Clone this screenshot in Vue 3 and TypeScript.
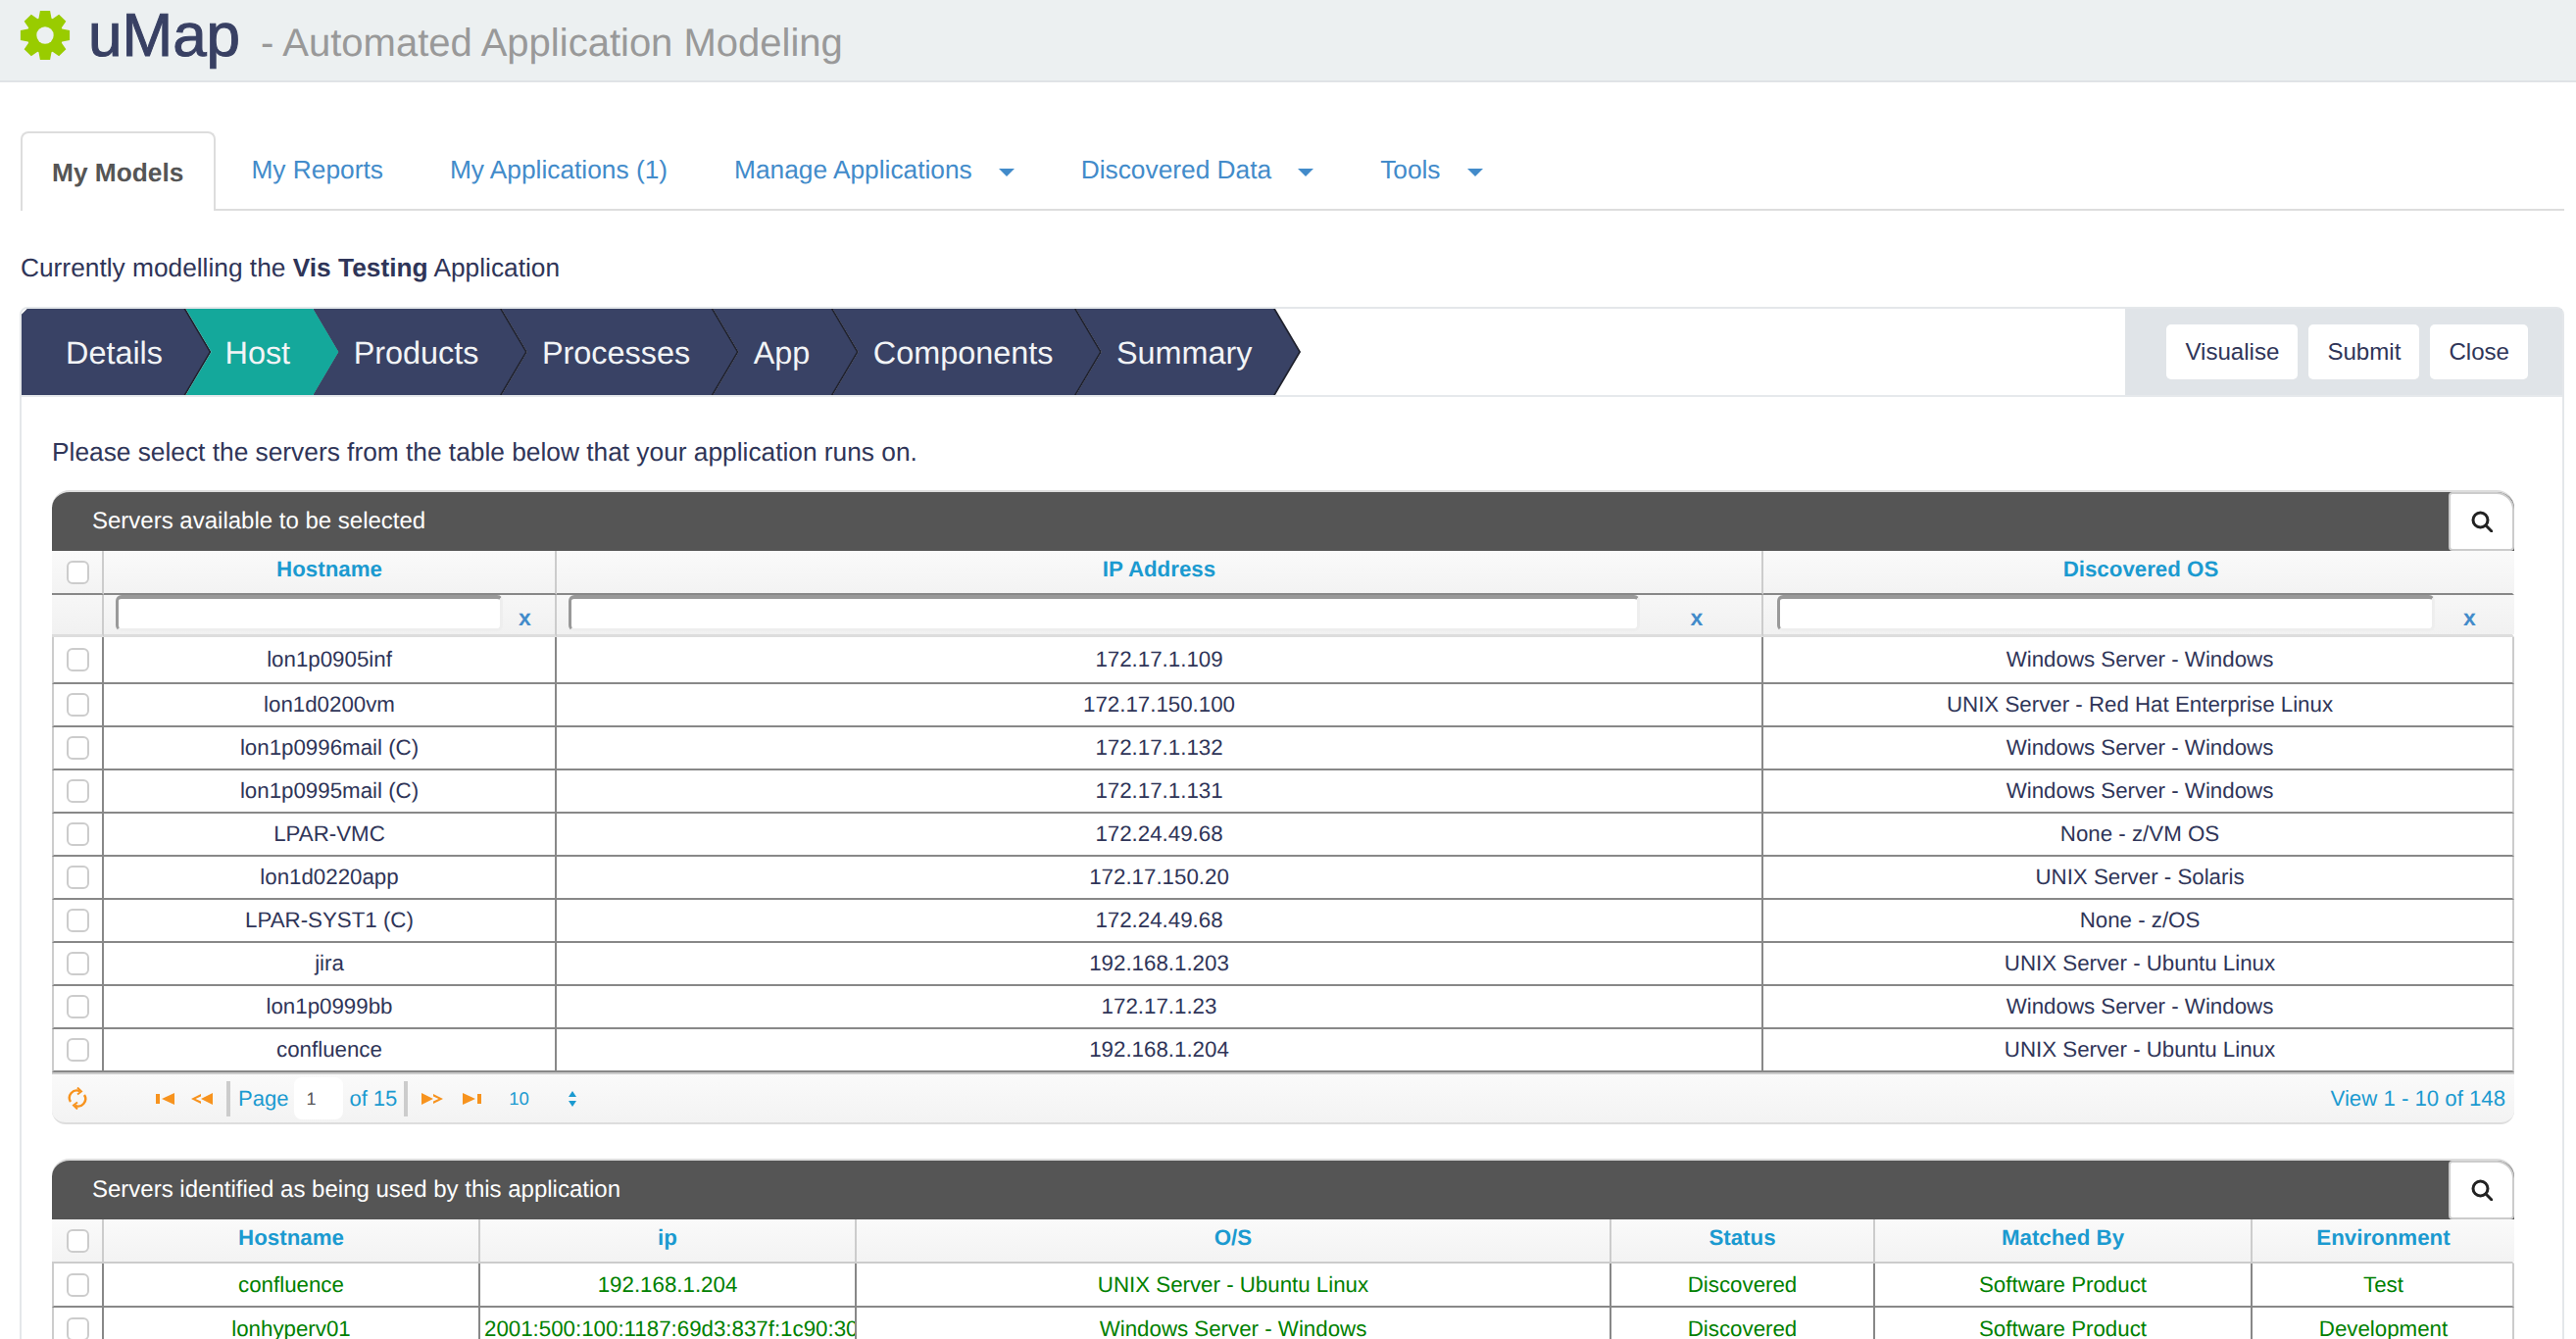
<script setup lang="ts">
const tabs = [
  { label: 'My Reports', caret: false },
  { label: 'My Applications (1)', caret: false },
  { label: 'Manage Applications', caret: true },
  { label: 'Discovered Data', caret: true },
  { label: 'Tools', caret: true },
]
const steps = ['Details', 'Host', 'Products', 'Processes', 'App', 'Components', 'Summary']
const actions = ['Visualise', 'Submit', 'Close']

function gearPath(): string {
  const cx = 26, cy = 26, outer = 25.6, root = 18.5
  const pts: string[] = []
  for (let i = 0; i < 8; i++) {
    const a = (i * Math.PI) / 4 - Math.PI / 2
    const t = [
      [root, -0.36],
      [outer, -0.2],
      [outer, 0.2],
      [root, 0.36],
    ]
    for (const [r, d] of t) {
      pts.push(`${(cx + r * Math.cos(a + d)).toFixed(2)} ${(cy + r * Math.sin(a + d)).toFixed(2)}`)
    }
  }
  return 'M' + pts.join('L') + 'Z'
}
const gear = gearPath()

const availCols = [53, 462, 1231, 766]
const availHead = ['Hostname', 'IP Address', 'Discovered OS']
const filters = [395, 1093, 671]
const availRows = [
  ['lon1p0905inf', '172.17.1.109', 'Windows Server - Windows'],
  ['lon1d0200vm', '172.17.150.100', 'UNIX Server - Red Hat Enterprise Linux'],
  ['lon1p0996mail (C)', '172.17.1.132', 'Windows Server - Windows'],
  ['lon1p0995mail (C)', '172.17.1.131', 'Windows Server - Windows'],
  ['LPAR-VMC', '172.24.49.68', 'None - z/VM OS'],
  ['lon1d0220app', '172.17.150.20', 'UNIX Server - Solaris'],
  ['LPAR-SYST1 (C)', '172.24.49.68', 'None - z/OS'],
  ['jira', '192.168.1.203', 'UNIX Server - Ubuntu Linux'],
  ['lon1p0999bb', '172.17.1.23', 'Windows Server - Windows'],
  ['confluence', '192.168.1.204', 'UNIX Server - Ubuntu Linux'],
]
const usedCols = [53, 384, 384, 770, 269, 385, 267]
const usedHead = ['Hostname', 'ip', 'O/S', 'Status', 'Matched By', 'Environment']
const usedRows = [
  ['confluence', '192.168.1.204', 'UNIX Server - Ubuntu Linux', 'Discovered', 'Software Product', 'Test'],
  ['lonhyperv01', '2001:500:100:1187:69d3:837f:1c90:30a2', 'Windows Server - Windows', 'Discovered', 'Software Product', 'Development'],
]
</script>

<template>
  <div class="page">
    <header class="brand">
      <svg class="gear" width="52" height="52" viewBox="0 0 52 52">
        <path :d="gear" fill="#99cc00" />
        <circle cx="26" cy="26" r="8.7" fill="#ecf0f1" />
      </svg>
      <span class="logo">uMap</span>
      <span class="tagline">- Automated Application Modeling</span>
    </header>

    <nav class="tabs">
      <div class="tab active">My Models</div>
      <div v-for="t in tabs" :key="t.label" class="tab">
        {{ t.label }}<i v-if="t.caret" class="caret"></i>
      </div>
    </nav>

    <p class="context">Currently modelling the <b>Vis Testing</b> Application</p>

    <section class="panel">
      <div class="wizard">
        <div class="steps">
          <div v-for="s in steps" :key="s" class="step" :class="{ current: s === 'Host' }">
            <span>{{ s }}</span>
          </div>
        </div>
        <div class="actions">
          <button v-for="a in actions" :key="a" class="action">{{ a }}</button>
        </div>
      </div>

      <div class="body">
        <p class="hint">Please select the servers from the table below that your application runs on.</p>

        <div class="grid">
          <div class="title">
            <span>Servers available to be selected</span>
            <button class="search" aria-label="Search">
              <svg width="22" height="22" viewBox="0 0 22 22" fill="none" stroke="#222" stroke-width="3">
                <circle cx="9.5" cy="9.5" r="7.5" />
                <path d="M15 15l6 6" stroke-linecap="round" />
              </svg>
            </button>
          </div>
          <table>
            <colgroup><col v-for="(c, i) in availCols" :key="i" :style="{ width: c + 'px' }" /></colgroup>
            <thead>
              <tr class="head strong">
                <th><i class="check"></i></th>
                <th v-for="h in availHead" :key="h">{{ h }}</th>
              </tr>
              <tr class="filter">
                <th></th>
                <th v-for="(f, i) in filters" :key="i">
                  <div class="filter-cell">
                    <input type="text" :style="{ width: f + 'px' }" />
                    <span class="clear">x</span>
                  </div>
                </th>
              </tr>
            </thead>
            <tbody>
              <tr v-for="r in availRows" :key="r[0]" class="row">
                <td><i class="check"></i></td>
                <td v-for="(c, i) in r" :key="i">{{ c }}</td>
              </tr>
            </tbody>
          </table>
          <div class="pager">
            <svg class="refresh" width="20" height="23" viewBox="0 0 20 23" fill="none" stroke="#f7931e" stroke-width="2.4">
              <path d="M3 15A7.5 7.5 0 0 1 12.5 4.2" />
              <path d="M17 8A7.5 7.5 0 0 1 7.5 18.8" />
              <path d="M10 0.5l4 4-4 3M10 22.5l-4-4 4-3" stroke-width="2" />
            </svg>
            <svg class="nav first" width="19" height="12" viewBox="0 0 19 12" fill="#f7931e">
              <rect x="0" y="1" width="4" height="10" />
              <path d="M6 6l13-6v12z" />
            </svg>
            <svg class="nav prev" width="22" height="12" viewBox="0 0 22 12" fill="#f7931e">
              <path d="M10 6l12-6v12z" />
              <path d="M0 6l10-5v2.400L4.500 6 10 8.600V11z" />
            </svg>
            <i class="sep"></i>
            <span class="page-label">Page</span>
            <span class="page-input">1</span>
            <span class="page-label">of 15</span>
            <i class="sep"></i>
            <svg class="nav next" width="22" height="12" viewBox="0 0 22 12" fill="#f7931e">
              <path d="M12 6L0 0v12z" />
              <path d="M22 6L12 1v2.400L17.500 6 12 8.600V11z" />
            </svg>
            <svg class="nav last" width="19" height="12" viewBox="0 0 19 12" fill="#f7931e">
              <path d="M13 6L0 0v12z" />
              <rect x="15" y="1" width="4" height="10" />
            </svg>
            <span class="size">10</span>
            <svg class="spin" width="8" height="16" viewBox="0 0 8 16" fill="#1b9ad0">
              <path d="M4 0l4 6H0zM4 16l4-6H0z" />
            </svg>
            <span class="view">View 1 - 10 of 148</span>
          </div>
        </div>

        <div class="grid second">
          <div class="title">
            <span>Servers identified as being used by this application</span>
            <button class="search" aria-label="Search">
              <svg width="22" height="22" viewBox="0 0 22 22" fill="none" stroke="#222" stroke-width="3">
                <circle cx="9.5" cy="9.5" r="7.5" />
                <path d="M15 15l6 6" stroke-linecap="round" />
              </svg>
            </button>
          </div>
          <table>
            <colgroup><col v-for="(c, i) in usedCols" :key="i" :style="{ width: c + 'px' }" /></colgroup>
            <thead>
              <tr class="head">
                <th><i class="check"></i></th>
                <th v-for="h in usedHead" :key="h">{{ h }}</th>
              </tr>
            </thead>
            <tbody>
              <tr v-for="r in usedRows" :key="r[0]" class="row used">
                <td><i class="check"></i></td>
                <td v-for="(c, i) in r" :key="i" :class="{ clip: c.length > 30 }">{{ c }}</td>
              </tr>
            </tbody>
          </table>
        </div>
      </div>
    </section>
  </div>
</template>

<style scoped>
.page {
  height: 1366px;
  overflow: hidden;
  background: #fff;
  font-family: "Liberation Sans", Arial, sans-serif;
  color: #2f3558;
  text-rendering: geometricPrecision;
}
.brand {
  height: 82px;
  background: #ecf0f1;
  border-bottom: 2px solid #e0e3e6;
  display: flex;
  align-items: center;
  padding-left: 20px;
}
.gear { flex: none; margin-top: -11px; }
.logo {
  font-size: 62px;
  line-height: 70px;
  color: #384063;
  margin-left: 18px;
  margin-top: -8px;
  -webkit-text-stroke: 1px #384063;
}
.tagline {
  font-size: 40px;
  line-height: 60px;
  color: #999;
  margin-left: 21px;
  margin-top: 6px;
}
.tabs {
  margin: 50px 12px 0 21px;
  height: 79px;
  border-bottom: 2px solid #ddd;
  display: flex;
}
.tab {
  height: 79px;
  box-sizing: border-box;
  padding: 0 32px 0;
  margin-right: 4px;
  line-height: 78px;
  font-size: 26.3px;
  color: #428bca;
  white-space: nowrap;
}
.tab.active {
  height: 81px;
  background: #fff;
  border: 2px solid #ddd;
  border-bottom: 0;
  border-radius: 8px 8px 0 0;
  font-weight: 700;
  color: #555;
  padding: 0 31px 0 30px;
  line-height: 81px;
}
.caret {
  display: inline-block;
  width: 0;
  height: 0;
  margin-left: 27px;
  border-left: 8px solid transparent;
  border-right: 8px solid transparent;
  border-top: 8px solid #428bca;
  vertical-align: 2px;
}
.context {
  margin: 42px 0 0 21px;
  font-size: 26.3px;
  line-height: 32px;
  color: #2f3558;
}
.panel {
  margin: 24px 12px 0 20px;
  border: 2px solid #e4e7ea;
  border-radius: 8px;
  height: 1100px;
  box-sizing: border-box;
}
.wizard {
  display: flex;
  justify-content: space-between;
  height: 88px;
}
.steps { display: flex; }
.step {
  position: relative;
  box-sizing: border-box;
  height: 88px;
  padding: 0 49.500px 0 41px;
  margin-right: -26px;
  line-height: 90px;
  font-size: 32.4px;
  color: #f2f4f6;
  white-space: nowrap;
  background: #20222e;
  clip-path: polygon(0 0, calc(100% - 26px) 0, 100% 50%, calc(100% - 26px) 100%, 0 100%, 26px 50%);
}
.step::before {
  content: "";
  position: absolute;
  inset: 0;
  background: #394265;
  clip-path: polygon(0 0, calc(100% - 28px) 0, calc(100% - 2px) 50%, calc(100% - 28px) 100%, 0 100%);
}
.step span { position: relative; }
.step:first-child {
  padding-left: 45px;
  clip-path: polygon(6px 0, calc(100% - 26px) 0, 100% 50%, calc(100% - 26px) 100%, 0 100%, 0 6px);
}
.step.current { background: #14a89b; padding-left: 40px; }
.step.current::before { display: none; }
.actions {
  width: 446px;
  box-sizing: border-box;
  background: #e0e4e8;
  display: flex;
  align-items: flex-start;
  justify-content: flex-end;
  gap: 11px;
  padding: 16px 35px 0 0;
}
.action {
  height: 56px;
  padding: 0 19px;
  border: 0;
  border-radius: 5px;
  background: #fff;
  font: 24.1px "Liberation Sans", Arial, sans-serif;
  color: #2f3558;
}
.body {
  padding: 0 49px 0 31px;
  border-top: 2px solid #e6e9ec;
}
.hint {
  margin: 0;
  padding-top: 39px;
  font-size: 26.3px;
  line-height: 34px;
  color: #2f3558;
}
.grid { margin-top: 22px; }
.grid.second { margin-top: 35px; }
.title {
  height: 62px;
  box-sizing: border-box;
  background: #555;
  border-top: 2px solid #ddd;
  border-radius: 18px 18px 0 0;
  display: flex;
  align-items: center;
  justify-content: space-between;
  padding-left: 41px;
  color: #fff;
  font-size: 24px;
}
.search {
  width: 67px;
  height: 60px;
  padding: 0;
  background: #fff;
  border: 2px solid #ccc;
  border-radius: 4px 18px 4px 4px;
  display: flex;
  align-items: center;
  justify-content: center;
}
table {
  width: 2512px;
  table-layout: fixed;
  border-collapse: separate;
  border-spacing: 0;
}
th, td {
  box-sizing: border-box;
  padding: 0;
  text-align: center;
  border-right: 2px solid #ccc;
  white-space: nowrap;
  overflow: hidden;
}
th:last-child { border-right-color: transparent; }
th:last-child, td:last-child { padding-left: 2px; }
.head th {
  height: 45px;
  background: linear-gradient(#fafafa, #f3f3f3);
  border-bottom: 2px solid #ccc;
  color: #1b9ad0;
  font-size: 22.3px;
  font-weight: 700;
  padding-bottom: 6px;
}
.head th:first-child { padding-bottom: 0; }
.head.strong th { border-bottom-color: #888; }
.head.strong th:last-child { padding-left: 6px; }
.filter th {
  height: 43px;
  background: linear-gradient(#f7f7f7, #f1f1f1);
  border-bottom: 3px solid #ddd;
  vertical-align: top;
}
.filter-cell {
  display: flex;
  align-items: flex-start;
  padding-left: 12px;
}
input {
  height: 37px;
  box-sizing: border-box;
  background: #fff;
  border: solid #eee;
  border-width: 4px 3px 3px 3px;
  border-top-color: #999;
  border-left-color: #999;
  border-radius: 6px;
  outline: 0;
  padding: 0;
}
.clear {
  flex: 1;
  padding-right: 8px;
  padding-top: 9px;
  color: #428bca;
  font-size: 23px;
  font-weight: 700;
  line-height: 28px;
}
.row td {
  height: 44px;
  background: #fff;
  border-right-color: #888;
  border-bottom: 2px solid #888;
  font-size: 22.3px;
  color: #2f3558;
}
.row:first-child td { height: 48px; }
.row td:first-child { border-left: 2px solid #ccc; }
.row td:last-child { border-right-color: #ccc; padding-left: 4px; }
.row.used td { color: #008000; height: 45px; }
.row.used td:last-child { padding-left: 2px; }
.clip { text-align: left; padding-left: 4px; }
.check {
  display: block;
  width: 23px;
  height: 24px;
  box-sizing: border-box;
  margin: 0 0 0 15px;
  background: #fff;
  border: 2px solid #ccc;
  border-radius: 6px;
}
td .check { margin-left: 13px; }
.pager {
  height: 53px;
  box-sizing: border-box;
  background: linear-gradient(#fafafa, #f3f3f3);
  border-top: 2px solid #ccc;
  border-bottom: 2px solid #ddd;
  border-radius: 0 0 14px 14px;
  display: flex;
  align-items: center;
  font-size: 22px;
  color: #1b9ad0;
  padding-left: 16px;
  padding-right: 9px;
}
.nav { flex: none; }
.first { margin-left: 70px; }
.prev { margin-left: 17px; }
.sep {
  width: 4px;
  height: 36px;
  background: #ccc;
  margin: 0 8px 0 14px;
  flex: none;
}
.page-label { flex: none; }
.page-input {
  width: 50px;
  height: 43px;
  box-sizing: border-box;
  margin: 0 6px;
  padding-left: 12px;
  background: #fff;
  border-radius: 8px;
  color: #555;
  font-size: 18px;
  line-height: 45px;
}
.page-label + .sep { margin: 0 14px 0 7px; }
.next { margin-left: 0; }
.last { margin-left: 20px; }
.size {
  margin-left: 28px;
  font-size: 18.5px;
}
.spin { margin-left: 40px; }
.view {
  margin-left: auto;
  font-size: 22.2px;
}
</style>

<style>
html, body { overflow: hidden; background: #fff; }
</style>
